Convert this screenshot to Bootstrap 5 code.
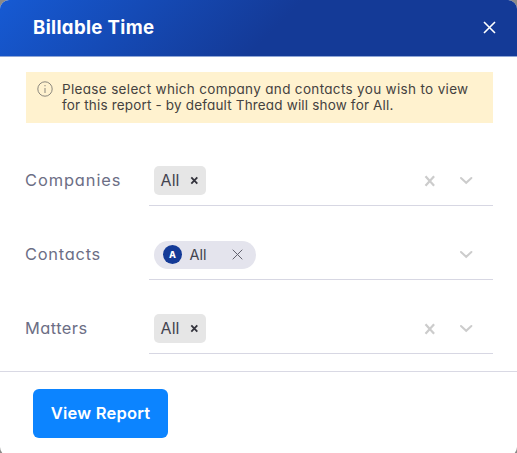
<!DOCTYPE html>
<html lang="en">
<head>
<meta charset="utf-8">
<meta name="viewport" content="width=device-width, initial-scale=1">
<title>Billable Time</title>
<link href="https://cdn.jsdelivr.net/npm/bootstrap@5.3.0/dist/css/bootstrap.min.css" rel="stylesheet">
<style>
html, body { height: 100%; }
body { background: #8a8a88; font-family: Inter, "Open Sans", sans-serif; font-feature-settings: "cv11"; color: #43434f; overflow: hidden; }
.dialog-box { width: 517px; height: 456px; border-radius: 9px; }
.dialog-head { height: 57px; padding: 0 20px 2px 33px; background: linear-gradient(135deg, #165ad3 0%, #143a97 53%, #143a97 100%); border-bottom: 1px solid #8fa6d6; }
.dialog-title { font-size: 18.6px; font-weight: 700; letter-spacing: .35px; line-height: 24px; }
.dialog-body { padding: 15px 24px 0 25px; height: 314px; }
.notice { height: 51px; margin-left: .5px; padding: 9px 0 0 11px; background: #fff2cf; font-size: 13.5px; line-height: 16px; gap: 9.5px; color: #45423f; }
.notice-line { white-space: nowrap; display: block; }
.n-one { letter-spacing: .33px; }
.n-two { letter-spacing: .17px; }
.field-label { width: 123.5px; font-size: 16.4px; color: #6c6e85; line-height: 25px; }
.l-companies { letter-spacing: .92px; }
.l-contacts { letter-spacing: .76px; }
.l-matters { letter-spacing: .45px; }
.field-row { height: 50px; margin-bottom: 24.2px; }
.field-list { padding-top: 33px; }
.field-control { border-bottom: 1px solid #d7d7e3; padding: 0 20px 0 5.5px; }
.chip { height: 29px; width: 52px; padding: 0 7px 1px 6.5px; background: #e6e6e6; border-radius: 5px; font-size: 16px; letter-spacing: .1px; }
.chip-round { height: 28px; width: 101.5px; padding: 0 12.5px 0 9px; background: #e4e4ed; border-radius: 14px; font-size: 14.5px; }
.initial { width: 19px; height: 19px; background: #143a97; font-size: 9px; font-weight: 800; margin-right: 7.5px; }
.clear-icon { margin-right: 23px; }
.dialog-foot { height: 85px; border-top: 1px solid #d9d9e4; padding: 17px 33px; }
.btn-report { --bs-btn-bg: #0c84ff; --bs-btn-color: #fff; --bs-btn-border-width: 0; --bs-btn-hover-bg: #0875e5; --bs-btn-hover-color: #fff; --bs-btn-border-radius: 6px; --bs-btn-padding-x: 0; width: 135px; height: 49px; font-size: 16.5px; font-weight: 600; letter-spacing: .22px; line-height: 22px; padding-bottom: 8px; }
svg { display: block; flex: none; fill: none; }
</style>
</head>
<body>
<main class="dialog-box bg-white overflow-hidden">
  <header class="dialog-head d-flex align-items-center justify-content-between text-white">
    <h1 class="dialog-title mb-0">Billable Time</h1>
    <svg width="15" height="15" viewBox="0 0 15 15" stroke="#fff" stroke-width="1.6"><path d="M2 2l11 11M13 2L2 13"/></svg>
  </header>
  <section class="dialog-body">
    <div class="notice d-flex">
      <svg width="16" height="16" viewBox="0 0 16 16" stroke="#8b877d"><circle cx="8" cy="8" r="7.2"/><path d="M8 7v5M8 4v1.3"/></svg>
      <div><span class="notice-line n-one">Please select which company and contacts you wish to view</span><span class="notice-line n-two">for this report - by default Thread will show for All.</span></div>
    </div>
    <div class="field-list">
      <div class="field-row d-flex">
        <div class="field-label l-companies pt-2 mt-1 flex-shrink-0">Companies</div>
        <div class="field-control d-flex align-items-center flex-grow-1">
          <div class="chip d-flex align-items-center justify-content-between">All<svg width="9" height="9" viewBox="0 0 9 9" stroke="#34343d" stroke-width="1.8"><path d="M1.3 1.3l6 6.4M7.3 1.3l-6 6.4"/></svg></div>
          <svg class="clear-icon ms-auto" width="12" height="12" viewBox="0 0 12 12" stroke="#ccc" stroke-width="2.2"><path d="M1.5 1.2l8.6 9.6M10.1 1.2L1.5 10.8"/></svg>
          <svg width="14" height="9" viewBox="0 0 14 9" stroke="#ccc" stroke-width="2" stroke-linecap="round"><path d="M2 2l5.2 4.8L12.4 2"/></svg>
        </div>
      </div>
      <div class="field-row d-flex">
        <div class="field-label l-contacts pt-2 mt-1 flex-shrink-0">Contacts</div>
        <div class="field-control d-flex align-items-center flex-grow-1">
          <div class="chip-round d-flex align-items-center"><span class="initial rounded-circle text-white d-flex align-items-center justify-content-center">A</span>All<svg class="ms-auto" width="11" height="11" viewBox="0 0 11 11" stroke="#62626e"><path d="M.7.7l9.6 9.6M10.3.7L.7 10.3"/></svg></div>
          <svg class="ms-auto" width="14" height="9" viewBox="0 0 14 9" stroke="#ccc" stroke-width="2" stroke-linecap="round"><path d="M2 2l5.2 4.8L12.4 2"/></svg>
        </div>
      </div>
      <div class="field-row d-flex mb-0">
        <div class="field-label l-matters pt-2 mt-1 flex-shrink-0">Matters</div>
        <div class="field-control d-flex align-items-center flex-grow-1">
          <div class="chip d-flex align-items-center justify-content-between">All<svg width="9" height="9" viewBox="0 0 9 9" stroke="#34343d" stroke-width="1.8"><path d="M1.3 1.3l6 6.4M7.3 1.3l-6 6.4"/></svg></div>
          <svg class="clear-icon ms-auto" width="12" height="12" viewBox="0 0 12 12" stroke="#ccc" stroke-width="2.2"><path d="M1.5 1.2l8.6 9.6M10.1 1.2L1.5 10.8"/></svg>
          <svg width="14" height="9" viewBox="0 0 14 9" stroke="#ccc" stroke-width="2" stroke-linecap="round"><path d="M2 2l5.2 4.8L12.4 2"/></svg>
        </div>
      </div>
    </div>
  </section>
  <footer class="dialog-foot"><button class="btn btn-report" type="button">View Report</button></footer>
</main>
<script src="https://cdn.jsdelivr.net/npm/bootstrap@5.3.0/dist/js/bootstrap.bundle.min.js"></script>
</body>
</html>
